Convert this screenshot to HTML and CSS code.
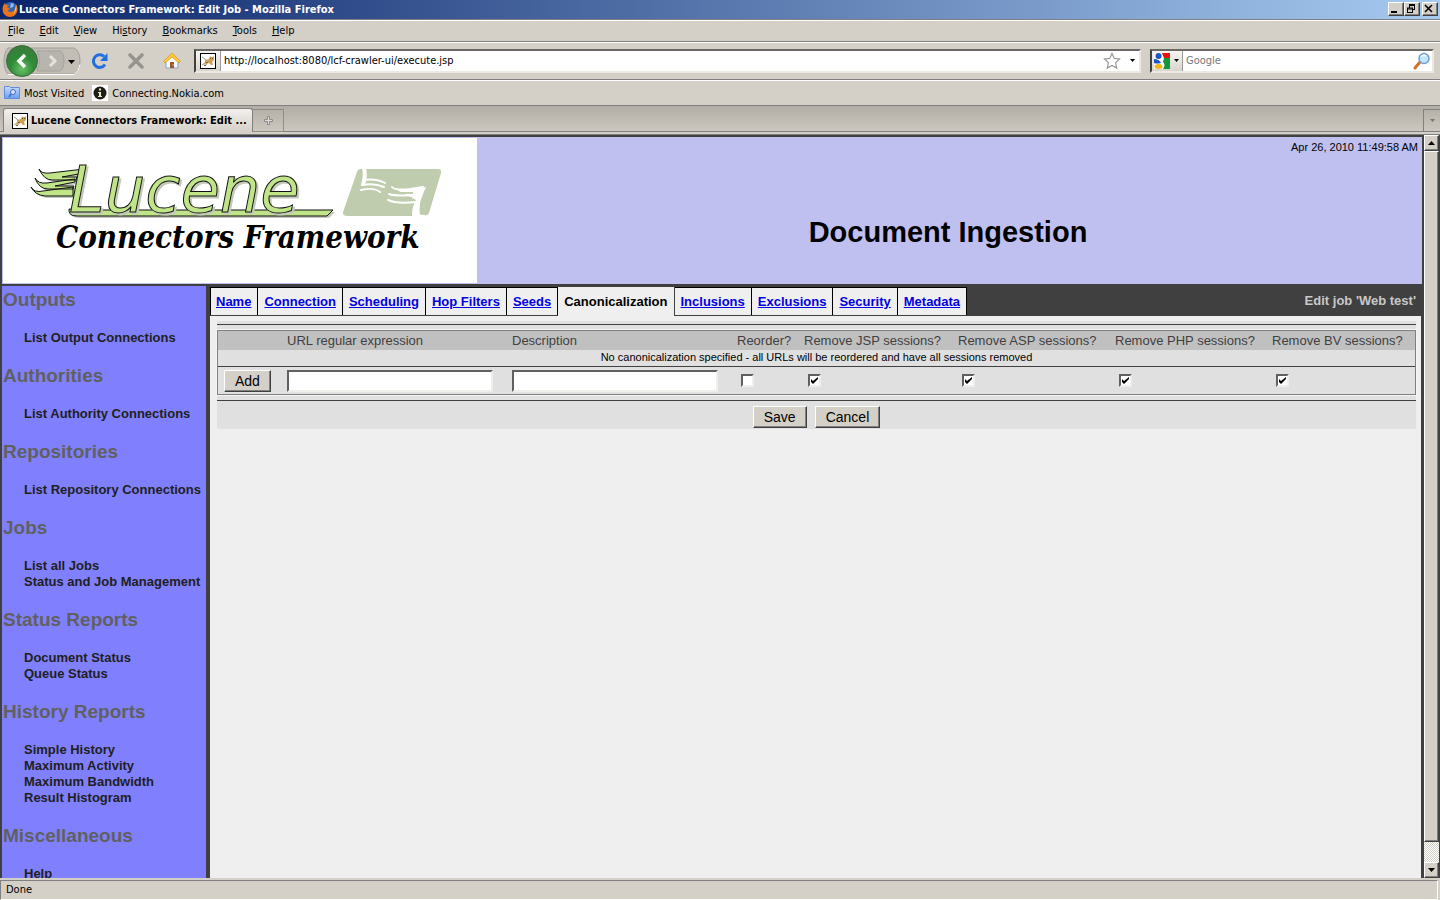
FILE: index.html
```html
<!DOCTYPE html>
<html lang="en">
<head>
    <meta charset="UTF-8">
    <meta name="viewport" content="width=device-width, initial-scale=1.0">
    <title>Lucene Connectors Framework: Edit Job</title>
    <link rel="stylesheet" href="styles.css">
</head>
<body>

<svg width="0" height="0" class="defs" aria-hidden="true">
    <defs>
        <radialGradient id="green" cx="50%" cy="75%" r="75%">
            <stop offset="0" stop-color="#6cc06a"/>
            <stop offset="0.5" stop-color="#2f8a35"/>
            <stop offset="1" stop-color="#3d7a3f"/>
        </radialGradient>
        <linearGradient id="fold" x1="0" y1="0" x2="0" y2="1">
            <stop offset="0" stop-color="#c6dcff"/>
            <stop offset="1" stop-color="#6e9df2"/>
        </linearGradient>
    </defs>
    <symbol id="cat" viewBox="0 0 16 16">
        <rect x="0.5" y="0.5" width="15" height="15" fill="#fff" stroke="#000"/>
        <path d="M2 4l3 2 1 2M2 12l3-2M4 13l3-2" fill="none" stroke="#999"/>
        <path d="M5 7l4-1 1-3 1 1h2l1-1v4l-2 2 1 3h-2l-2-2-3 1-3 1H3l2-3z" fill="#d2a052"/>
        <path d="M10 5.500h1M12 5.500h1M6 9.500h2M4 12.500h2" stroke="#77603a"/>
    </symbol>
</svg>

<header class="titlebar">
    <svg width="18" height="17" viewBox="0 0 18 17">
        <circle cx="9.500" cy="8" r="7" fill="#3467b8"/>
        <path d="M10 2l3 1-1 3-3 1z" fill="#8ec1ef"/>
        <path d="M4 2C1 5 1 10 3 13c3 4 9 4 12 0 2-3 2-7 0-10 0 3-1 5-2 7-3 2-6 1-6-1l2-1-3-2 2-2-3 0z" fill="#e8731b"/>
        <path d="M15 4c1 3 0 7-3 9 2-3 2-5 3-9z" fill="#ffce3a"/>
    </svg>
    <span class="title">Lucene Connectors Framework: Edit Job - Mozilla Firefox</span>
    <button class="win" aria-label="Minimize"><svg width="12" height="10"><path d="M2 7h6v2H2z"/></svg></button>
    <button class="win" aria-label="Restore"><svg width="12" height="10"><path d="M4 0.500h6M4 1.500h6M9.500 1v5M4.500 1v3M8 5.500h2M2 4h6M2 5h6M7.500 4v5M2.500 4v5M2 8.500h6" fill="none" stroke="#000"/></svg></button>
    <button class="win close" aria-label="Close"><svg width="12" height="10"><path d="M2 1l7 7M9 1L2 8" fill="none" stroke="#000" stroke-width="1.600"/></svg></button>
</header>

<nav class="menubar">
    <a href="#"><u>F</u>ile</a>
    <a href="#"><u>E</u>dit</a>
    <a href="#"><u>V</u>iew</a>
    <a href="#">Hi<u>s</u>tory</a>
    <a href="#"><u>B</u>ookmarks</a>
    <a href="#"><u>T</u>ools</a>
    <a href="#"><u>H</u>elp</a>
</nav>

<div class="toolbar">
    <button class="backforward" aria-label="Back and forward">
        <svg width="78" height="34" viewBox="0 0 78 34">
            <path d="M5 4h66q6 3 6 13t-6 13H5Q1 26 1 17T5 4z" fill="#c2beb6" stroke="#a29e97"/>
            <path d="M5 30.500h66q5-3 6-10" fill="none" stroke="#fff"/>
            <path d="M34 7h23q4 2 4 10t-4 10H34q5-10 0-20z" fill="#b8b5ae" stroke="#a5a29b"/>
            <path d="M47 12l5 5-5 5" fill="none" stroke="#e4e2de" stroke-width="3"/>
            <circle cx="19" cy="17" r="15.500" fill="url(#green)" stroke="#3c6b3e"/>
            <path d="M22 11l-6 6 6 6" fill="none" stroke="#fff" stroke-width="3.500"/>
            <path d="M65 16h7l-3.500 4z"/>
        </svg>
    </button>
    <button class="tool" aria-label="Reload">
        <svg width="18" height="18" viewBox="0 0 18 18">
            <path d="M14 12.500A6.300 6.300 0 1 1 13 4.500" fill="none" stroke="#1e6fe0" stroke-width="3"/>
            <path d="M16.500 1v8H9z" fill="#1e6fe0"/>
        </svg>
    </button>
    <button class="tool" aria-label="Stop">
        <svg width="18" height="18" viewBox="0 0 18 18"><path d="M3 3l12 12M15 3L3 15" fill="none" stroke="#96948f" stroke-width="3.600" stroke-linecap="round"/></svg>
    </button>
    <button class="tool" aria-label="Home">
        <svg width="18" height="18" viewBox="0 0 18 18">
            <path d="M3 9l6-6 6 6v7H3z" fill="#f6f8fc" stroke="#8e9fc0"/>
            <path d="M9 1l8.500 8.500-1.500 1.500-7-6-7 6L0.500 9.500z" fill="#ffc93c" stroke="#dc9a1c" stroke-width="0.800"/>
            <path d="M7 10h4v6H7z" fill="#99572a"/>
            <path d="M9.500 12.500h1v1h-1z" fill="#fff"/>
        </svg>
    </button>
    <div class="field url">
        <span class="favicon"><svg width="16" height="16"><use href="#cat"/></svg></span>
        <input type="text" aria-label="Address" value="http://localhost:8080/lcf-crawler-ui/execute.jsp">
        <svg class="star" width="18" height="18" viewBox="0 0 18 18"><path d="M9 1.500l2.300 4.900 5.200.5-3.900 3.700 1.100 5.400L9 13.500 4.300 16l1.100-5.400L1.500 6.900l5.200-.5z" fill="#fff" stroke="#979797" stroke-width="1.200"/></svg>
        <svg width="5" height="3"><path d="M0 0h5L2.500 3z"/></svg>
    </div>
    <div class="field search">
        <span class="engine">
            <svg width="16" height="16" viewBox="0 0 16 16">
                <path d="M0 0h16v16H0z" fill="#fff"/>
                <path d="M8 0h8v5h-6z" fill="#ea1010"/>
                <path d="M10 5h6v11H9q3-4 0-7z" fill="#12983c"/>
                <circle cx="4.500" cy="3" r="3" fill="#1d55c4"/>
                <path d="M0 6q5 0 7 4-4 1-7 0z" fill="#1d55c4"/>
                <ellipse cx="4.500" cy="13.500" rx="4" ry="2.500" fill="#f5b514"/>
            </svg>
            <svg width="5" height="3"><path d="M0 0h5L2.500 3z"/></svg>
        </span>
        <input type="text" aria-label="Search" placeholder="Google">
        <svg width="18" height="18" viewBox="0 0 18 18">
            <path d="M2 16l5-6" stroke="#cf7430" stroke-width="3" stroke-linecap="round"/>
            <circle cx="11" cy="6.500" r="5" fill="#c3e6fb" stroke="#6f9fd0" stroke-width="1.500"/>
            <path d="M8 5q2-3 5-1" fill="none" stroke="#fff" stroke-width="1.500"/>
        </svg>
    </div>
</div>

<div class="bookmarks">
    <a href="#">
        <svg width="16" height="16" viewBox="0 0 16 16">
            <path d="M0.500 1.500h5l1 1h9v11H0.500z" fill="url(#fold)" stroke="#5f8ce0"/>
            <circle cx="9" cy="7" r="2.500" fill="#d5e6ff" stroke="#3f6cc6"/>
            <path d="M7 9l-2 3" stroke="#3f6cc6" stroke-width="1.500"/>
        </svg>
        Most Visited
    </a>
    <a href="#">
        <svg width="16" height="16" viewBox="0 0 16 16">
            <path d="M0 0h16v16H0z" fill="#fff"/>
            <circle cx="8" cy="8" r="6.500" fill="#1c1c1a"/>
            <path d="M7 3.500h2v2H7zM6 7h3v4h1v1H6v-1h1V8H6z" fill="#eee9b8"/>
        </svg>
        Connecting.Nokia.com
    </a>
</div>

<div class="tabstrip">
    <button class="browser-tab"><svg width="16" height="16"><use href="#cat"/></svg>Lucene Connectors Framework: Edit ...</button>
    <button class="new-tab" aria-label="New tab"><svg width="9" height="9"><path d="M3.500 0.500h2v3h3v2h-3v3h-2v-3h-3v-2h3z" fill="#ddd" stroke="#8e8b85"/></svg></button>
    <button class="all-tabs" aria-label="All tabs"><svg width="5" height="3"><path d="M0 0h5L2.500 3z" fill="#77746e"/></svg></button>
</div>

<div class="viewport">
    <div class="page">
        <div class="banner">
            <div class="logo">
                <svg width="474" height="145" viewBox="0 0 474 145" role="img" aria-label="Lucene Connectors Framework">
                    <g transform="translate(2 2)" fill="#c4c9bc">
                        <path d="M36 31q2 5 11 4l34-4v4l-22 4h15l-1 3H49q-8 0-13-11zM32 40q3 6 12 5l28-4v3l-20 4h19l-1 3H45q-9 0-13-11zM28 49q3 6 12 4l30-4v9H42q-10-1-14-9z"/>
                        <path d="M66 71q-1 7 8 7h250l6-6H78z"/>
                    </g>
                    <g fill="#bfe588" stroke="#111" stroke-linejoin="round">
                        <path d="M36 31q2 5 11 4l34-4v4l-22 4h15l-1 3H49q-8 0-13-11zM32 40q3 6 12 5l28-4v3l-20 4h19l-1 3H45q-9 0-13-11zM28 49q3 6 12 4l30-4v9H42q-10-1-14-9z"/>
                        <path d="M66 71q-1 7 8 7h250l6-6H78z"/>
                    </g>
                    <text class="wordmark shade" x="68" y="76">Lucene</text>
                    <text class="wordmark" x="66" y="74">Lucene</text>
                    <text class="subtitle" x="53" y="110">Connectors Framework</text>
                    <path d="M354 34q1-3 4-3h77q4 0 3 4l-12 40q-1 3-5 2l-8-1q-3 4-1 2h-67q-6 0-5-4z" fill="#bfccae"/>
                    <path d="M361 30q2 7-1 17" fill="none" stroke="#fff" stroke-width="4"/>
                    <g fill="none" stroke="#fff" stroke-width="2" stroke-linecap="round">
                        <path d="M360 42q13-2 22 3M359 47q13-2 22 2M358 52q13-3 19 2"/>
                        <path d="M389 49q4 5 31 0M386 56q8 3 30 0M385 62q8 4 28 2"/>
                    </g>
                    <path d="M390 50q14 3 33-1-5 11-6 17-1 6 0 12h-8q0-10 4-16" fill="#fff"/>
                    <path d="M392 55h18M389 60h20" stroke="#bfccae" stroke-width="2"/>
                </svg>
            </div>
            <div class="banner-main">
                <div class="date">Apr 26, 2010 11:49:58 AM</div>
                <h1>Document Ingestion</h1>
            </div>
        </div>

        <div class="columns">
            <nav class="sidebar">
                <h2>Outputs</h2>
                <ul>
                    <li><a href="#">List Output Connections</a></li>
                </ul>
                <h2>Authorities</h2>
                <ul>
                    <li><a href="#">List Authority Connections</a></li>
                </ul>
                <h2>Repositories</h2>
                <ul>
                    <li><a href="#">List Repository Connections</a></li>
                </ul>
                <h2>Jobs</h2>
                <ul>
                    <li><a href="#">List all Jobs</a></li>
                    <li><a href="#">Status and Job Management</a></li>
                </ul>
                <h2>Status Reports</h2>
                <ul>
                    <li><a href="#">Document Status</a></li>
                    <li><a href="#">Queue Status</a></li>
                </ul>
                <h2>History Reports</h2>
                <ul>
                    <li><a href="#">Simple History</a></li>
                    <li><a href="#">Maximum Activity</a></li>
                    <li><a href="#">Maximum Bandwidth</a></li>
                    <li><a href="#">Result Histogram</a></li>
                </ul>
                <h2>Miscellaneous</h2>
                <ul>
                    <li><a href="#">Help</a></li>
                </ul>
            </nav>

            <main class="content">
                <div class="tabs">
                    <a href="#">Name</a>
                    <a href="#">Connection</a>
                    <a href="#">Scheduling</a>
                    <a href="#">Hop Filters</a>
                    <a href="#">Seeds</a>
                    <span class="active">Canonicalization</span>
                    <a href="#">Inclusions</a>
                    <a href="#">Exclusions</a>
                    <a href="#">Security</a>
                    <a href="#">Metadata</a>
                    <span class="job">Edit job 'Web test'</span>
                </div>

                <form class="panel">
                    <hr>
                    <table>
                        <colgroup>
                            <col class="c-add"><col class="c-text"><col class="c-text"><col class="c-reorder">
                            <col class="c-jsp"><col class="c-asp"><col class="c-asp"><col>
                        </colgroup>
                        <thead>
                            <tr>
                                <th></th>
                                <th id="h-url">URL regular expression</th>
                                <th id="h-desc">Description</th>
                                <th id="h-reorder">Reorder?</th>
                                <th id="h-jsp">Remove JSP sessions?</th>
                                <th id="h-asp">Remove ASP sessions?</th>
                                <th id="h-php">Remove PHP sessions?</th>
                                <th id="h-bv">Remove BV sessions?</th>
                            </tr>
                        </thead>
                        <tbody>
                            <tr>
                                <td class="message" colspan="8">No canonicalization specified - all URLs will be reordered and have all sessions removed</td>
                            </tr>
                            <tr class="entry">
                                <td><button type="button">Add</button></td>
                                <td><input type="text" aria-labelledby="h-url"></td>
                                <td><input type="text" aria-labelledby="h-desc"></td>
                                <td><input type="checkbox" aria-labelledby="h-reorder"></td>
                                <td><input type="checkbox" aria-labelledby="h-jsp" checked></td>
                                <td><input type="checkbox" aria-labelledby="h-asp" checked></td>
                                <td><input type="checkbox" aria-labelledby="h-php" checked></td>
                                <td><input type="checkbox" aria-labelledby="h-bv" checked></td>
                            </tr>
                        </tbody>
                    </table>
                    <hr>
                    <div class="actions">
                        <button type="button">Save</button>
                        <button type="button">Cancel</button>
                    </div>
                </form>
            </main>
        </div>
    </div>

    <div class="scrollbar">
        <button aria-label="Scroll up"><svg width="7" height="4"><path d="M0 4h7L3.500 0z"/></svg></button>
        <div class="thumb"></div>
        <div class="track"></div>
        <button aria-label="Scroll down"><svg width="7" height="4"><path d="M0 0h7L3.500 4z"/></svg></button>
    </div>
</div>

<footer class="statusbar"><span>Done</span></footer>

</body>
</html>
```

FILE: styles.css
```css
* {
    margin: 0;
    padding: 0;
    box-sizing: border-box;
}

body {
    display: flex;
    flex-direction: column;
    height: 100vh;
    overflow: hidden;
    background-color: #d4d0c8;
    font-family: "DejaVu Sans Condensed", "DejaVu Sans", sans-serif;
    font-size: 11px;
    color: #000;
}

body > * {
    flex: none;
}

a {
    color: inherit;
    text-decoration: none;
}

svg {
    display: block;
    flex: none;
}

.defs {
    position: absolute;
}

button {
    font: inherit;
    color: inherit;
    background: none;
    border: none;
}

/* browser window */
.titlebar {
    display: flex;
    align-items: center;
    height: 19px;
    padding: 0 2px 1px 1px;
    background: linear-gradient(to right, #0a246a, #a6caf0);
    color: #fff;
    font-weight: bold;
}

.title {
    flex: 1;
    white-space: nowrap;
}

.win {
    width: 16px;
    height: 14px;
    background-color: #d4d0c8;
    border: 1px solid;
    border-color: #fff #404040 #404040 #fff;
    box-shadow: inset -1px -1px #808080;
}

.close {
    margin-left: 2px;
}

.menubar {
    display: flex;
    align-items: center;
    gap: 15px;
    height: 23px;
    padding-left: 8px;
    border-top: 1px solid #808080;
    border-bottom: 1px solid #808080;
    box-shadow: inset 0 1px #fff;
}

.toolbar {
    display: flex;
    align-items: center;
    height: 38px;
    padding: 0 6px 0 3px;
    border-bottom: 1px solid #808080;
    box-shadow: inset 0 1px #fff;
}

.backforward {
    margin-right: 10px;
}

.tool {
    width: 18px;
    margin-right: 18px;
}

.tool + .field {
    margin-left: -5px;
}

.field {
    display: flex;
    align-items: center;
    height: 24px;
    background-color: #fff;
    border: 2px solid;
    border-color: #6a6864 #ece9e2 #ece9e2 #404040;
}

.field input {
    flex: 1;
    min-width: 0;
    height: 18px;
    border: none;
    outline: none;
    background: none;
    font: inherit;
}

.field input::placeholder {
    color: #777;
    opacity: 1;
}

.url {
    flex: 1;
    margin-right: 9px;
    padding-right: 4px;
}

.url input {
    padding-left: 3px;
}

.star {
    margin-right: 9px;
}

.favicon,
.engine {
    display: flex;
    align-items: center;
    align-self: stretch;
    gap: 4px;
    padding: 0 4px;
    background: linear-gradient(#f6f5f3, #d8d5ce);
    border-right: 1px solid #999;
}

.engine {
    padding: 0 3px 0 2px;
}

.search {
    width: 284px;
    padding-right: 1px;
}

.search input {
    padding-left: 3px;
}

.bookmarks {
    display: flex;
    align-items: center;
    gap: 8px;
    height: 26px;
    padding: 1px 0 0 4px;
    border-bottom: 1px solid #808080;
    box-shadow: inset 0 1px #fff;
}

.bookmarks a {
    display: flex;
    align-items: center;
    gap: 4px;
}

.tabstrip {
    display: flex;
    align-items: flex-end;
    height: 28px;
    padding-left: 3px;
    background: linear-gradient(#b1ada5, #cdc9c1);
    border-bottom: 2px solid #d4d0c8;
    box-shadow: inset 0 -1px #808080;
}

.browser-tab {
    display: flex;
    align-items: center;
    gap: 3px;
    width: 250px;
    height: 24px;
    padding-left: 8px;
    background: linear-gradient(#f2f0ed, #d4d0c8);
    border: 1px solid #808080;
    border-bottom: none;
    border-radius: 3px 3px 0 0;
    font-weight: bold;
    white-space: nowrap;
}

.new-tab {
    display: grid;
    place-items: center;
    width: 31px;
    height: 23px;
    border: 1px solid #908d86;
    border-left: none;
}

.all-tabs {
    display: grid;
    place-items: center;
    width: 17px;
    height: 23px;
    margin-left: auto;
    border: 1px solid #808080;
    border-right: none;
}

.viewport {
    display: flex;
    flex: 1;
    min-height: 0;
    border-top: 1px solid #808080;
}

.statusbar {
    height: 22px;
    padding: 2px 2px 1px 0;
    line-height: 18px;
}

.statusbar span {
    display: block;
    padding-left: 5px;
    border: 1px solid;
    border-color: #808080 #fff #fff #808080;
}

/* scrollbar */
.scrollbar {
    display: flex;
    flex-direction: column;
    width: 16px;
    background-color: #d4d0c8;
    border-right: 1px solid #404040;
}

.scrollbar button,
.thumb {
    border: 1px solid;
    border-color: #fff #404040 #404040 #fff;
    box-shadow: inset -1px -1px #808080;
}

.scrollbar button {
    display: grid;
    place-items: center;
    height: 16px;
}

.thumb {
    flex: 34;
}

.track {
    flex: 1;
    background: repeating-conic-gradient(#fff 0 25%, #d4d0c8 0 50%) 0 0 / 2px 2px;
}

/* crawler page */
.page {
    display: flex;
    flex: 1;
    flex-direction: column;
    min-width: 0;
    padding: 2px 2px 0 2px;
    overflow: hidden;
    background-color: #404040;
    font-family: "Liberation Sans", Arial, sans-serif;
}

.banner {
    display: flex;
    flex: none;
    height: 147px;
    background-color: #c0c0f0;
}

.logo {
    margin: 1px;
    background-color: #fff;
}

.wordmark {
    font: italic 64px "DejaVu Sans", sans-serif;
    fill: #bfe588;
    stroke: #111;
}

.wordmark.shade {
    fill: #c4c9bc;
    stroke: #c4c9bc;
}

.subtitle {
    font: italic bold 31px "DejaVu Serif Condensed", "DejaVu Serif", serif;
}

.banner-main {
    flex: 1;
    padding: 4px 4px 0 0;
    text-align: center;
}

.date {
    line-height: 13px;
    text-align: right;
}

h1 {
    margin-top: 60px;
    font-size: 29px;
    line-height: 36px;
}

.columns {
    display: flex;
    flex: 1;
    min-height: 0;
    padding-top: 2px;
}

.sidebar {
    flex: none;
    width: 204px;
    padding: 2px 1px 0;
    overflow: hidden;
    background-color: #8080ff;
}

.sidebar h2 {
    color: #606060;
    font-size: 19px;
    line-height: 24px;
}

.sidebar ul {
    padding: 18px 0 18px 21px;
    list-style: none;
    color: #202020;
    font-size: 13px;
    font-weight: bold;
    line-height: 16px;
    white-space: nowrap;
}

.content {
    flex: 1;
    min-width: 0;
    margin: 0 1px 0 4px;
    background-color: #efefef;
}

.tabs {
    display: flex;
    height: 30px;
    padding-top: 1px;
    background-color: #404040;
    border-bottom: 1px solid #404040;
    font-size: 13px;
    font-weight: bold;
    line-height: 27px;
    white-space: nowrap;
}

.tabs a {
    padding: 0 6px;
    background-color: #efefef;
    border: 1px solid #000;
    border-width: 1px 1px 0 0;
    color: #0000e0;
    text-decoration: underline;
}

.tabs a:first-child {
    padding-left: 5px;
    border-left-width: 1px;
}

.active {
    height: 29px;
    padding: 1px 6px 0;
    background-color: #efefef;
    border-right: 1px solid #404040;
}

.job {
    margin-left: auto;
    padding-right: 5px;
    color: #c8c8c8;
}

.panel {
    margin: 5px 5px 0 7px;
    padding-top: 3px;
    background-color: #e0e0e0;
}

.panel hr {
    border: none;
    border-top: 1px solid #404040;
}

table {
    width: 100%;
    margin: 5px 0;
    table-layout: fixed;
    border: 1px solid #808080;
    outline: 1px solid #f4f4f4;
    border-spacing: 0;
}

.c-add {
    width: 63px;
}

.c-text {
    width: 225px;
}

.c-reorder {
    width: 67px;
}

.c-jsp {
    width: 154px;
}

.c-asp {
    width: 157px;
}

th {
    height: 19px;
    padding-left: 6px;
    background-color: #c0c0c0;
    color: #404040;
    font-size: 13px;
    font-weight: normal;
    line-height: 18px;
    text-align: left;
    white-space: nowrap;
}

.message {
    height: 17px;
    border-bottom: 1px solid #404040;
    line-height: 14px;
    text-align: center;
    vertical-align: top;
}

.entry td {
    height: 27px;
    padding-left: 6px;
    vertical-align: middle;
}

.entry input {
    display: block;
    background-color: #fff;
    border: 2px solid;
    border-color: #606060 #f0eeea #f0eeea #606060;
}

.entry input[type="text"] {
    width: 206px;
    height: 22px;
}

.entry input[type="checkbox"] {
    width: 13px;
    height: 13px;
    margin: 0 4px;
    appearance: none;
}

.entry input:checked::before {
    content: "";
    display: block;
    width: 7px;
    height: 7px;
    margin: 1px;
    background-color: #000;
    clip-path: polygon(0 2px, 2px 4px, 7px 0, 7px 2px, 2px 7px, 0 5px);
}

.panel button {
    height: 22px;
    padding: 0 10px;
    background-color: #d4d0c8;
    border: 1px solid;
    border-color: #fff #404040 #404040 #fff;
    box-shadow: inset -1px -1px #808080;
    font-size: 14px;
    line-height: 20px;
}

.actions {
    display: flex;
    justify-content: center;
    gap: 8px;
    padding: 5px 0 1px;
}
```
